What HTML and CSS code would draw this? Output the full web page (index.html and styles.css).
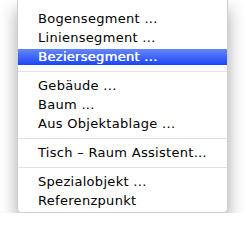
FILE: index.html
```html
<!DOCTYPE html>
<html lang="de">
<head>
<meta charset="UTF-8" />
<meta name="viewport" content="width=device-width, initial-scale=1" />
<title>Kontextmenü</title>
<link rel="stylesheet" href="styles.css">
</head>
<body>
<div class="menu" role="menu">
    <div class="item" role="menuitem">Bogensegment ...</div>
    <div class="item" role="menuitem">Liniensegment ...</div>
    <div class="item active" role="menuitem">Beziersegment ...</div>
    <div class="sep"></div>
    <div class="item" role="menuitem">Gebäude ...</div>
    <div class="item" role="menuitem">Baum ...</div>
    <div class="item" role="menuitem">Aus Objektablage ...</div>
    <div class="sep"></div>
    <div class="item" role="menuitem">Tisch – Raum Assistent...</div>
    <div class="sep"></div>
    <div class="item" role="menuitem">Spezialobjekt ...</div>
    <div class="item" role="menuitem">Referenzpunkt</div>
</div>
</body>
</html>
```

FILE: styles.css
```css
body {
    margin: 0;
    background: #fff;
    font-family: "DejaVu Sans", "Liberation Sans", sans-serif;
    font-size: 13px;
    letter-spacing: 0.3px;
    color: #000;
}
.menu {
    width: 211px;
    box-sizing: border-box;
    margin-left: 17px;
    padding: 11px 0 0;
    background: #fff;
    border: 1px solid #cfcfcf;
    border-top: none;
    border-radius: 0 0 5px 5px;
    box-shadow: 0 9px 18px rgba(0,0,0,0.35);
}
.item {
    line-height: 16px;
    margin-bottom: 3px;
    padding-left: 20px;
    white-space: nowrap;
}
.item.active {
    background: linear-gradient(#6487fc, #1c46f7);
    color: #fff;
    text-shadow: 0.5px 0 0 #fff;
}
.sep {
    height: 1px;
    background: #e2e2e2;
    margin: 6px 0;
}
```
